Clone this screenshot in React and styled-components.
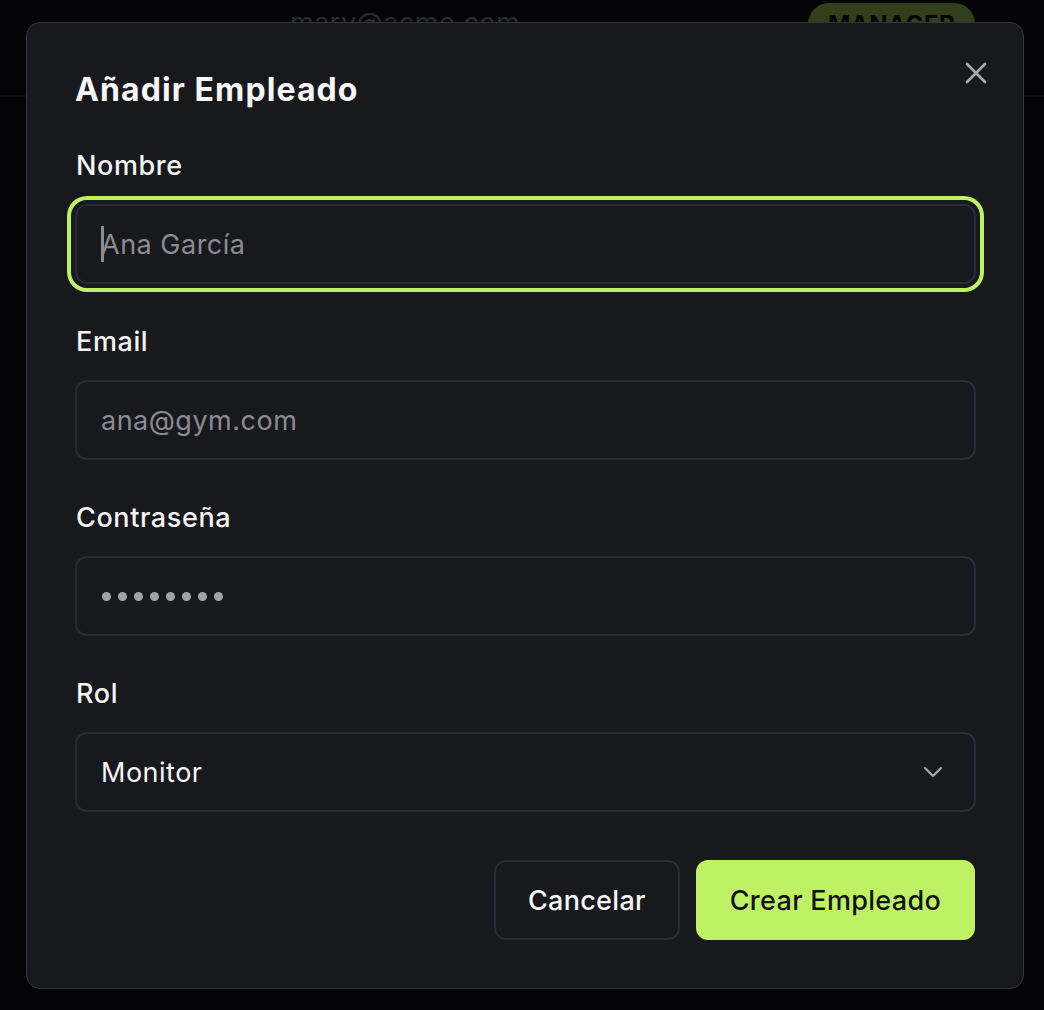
import React from 'react';
import styled, { createGlobalStyle } from 'styled-components';

const GlobalStyle = createGlobalStyle`
  html, body {
    margin: 0;
    padding: 0;
    background: #121317;
    font-family: Inter, "Noto Sans", sans-serif;
    overflow: hidden;
  }
  * { box-sizing: border-box; }
`;

const lime = '#bef264';

const Page = styled.div`
  width: 1044px;
  height: 1010px;
  background: #121317;
`;

const UserRow = styled.div`
  display: flex;
  align-items: flex-start;
  height: 97px;
  padding-top: 3px;
  border-bottom: 2px solid #2d2f37;
`;

const UserEmail = styled.span`
  margin-left: 290px;
  width: 518px;
  line-height: 40px;
  font-size: 27px;
  letter-spacing: 0.5px;
  color: #a6a7b0;
`;

const RoleBadge = styled.span`
  display: inline-flex;
  align-items: center;
  height: 42px;
  padding: 0 20px;
  border-radius: 21px;
  background: ${lime};
  color: #111;
  font-weight: 700;
  font-size: 24px;
  letter-spacing: 0.5px;
`;

const Overlay = styled.div`
  position: fixed;
  inset: 0;
  background: rgba(0, 0, 0, 0.74);
  display: flex;
  align-items: flex-start;
  padding: 22px 0 0 26px;
`;

const Dialog = styled.div`
  position: relative;
  width: 998px;
  background: #18191d;
  border: 1px solid #33343f;
  border-radius: 14px;
  padding: 48px;
`;

const Title = styled.h2`
  margin: 0 0 42px;
  font-size: 32px;
  line-height: 38px;
  font-weight: 700;
  color: #f7f7f8;
  letter-spacing: 1.1px;
`;

const CloseButton = styled.button`
  position: absolute;
  top: 30px;
  right: 27px;
  width: 40px;
  height: 40px;
  padding: 0;
  border: 0;
  background: none;
  color: #a9aab0;
  display: flex;
  align-items: center;
  justify-content: center;
`;

const Field = styled.div`
  display: flex;
  flex-direction: column;
  gap: 23px;
  margin-bottom: 43px;
`;

const Label = styled.label`
  padding-left: 1px;
  font-size: 27px;
  line-height: 30px;
  font-weight: 500;
  letter-spacing: 0.6px;
  color: #f4f4f5;
`;

const InputWrap = styled.div`
  position: relative;
  width: 901px;
`;

const Input = styled.input`
  width: 100%;
  height: 80px;
  padding: 0 24px;
  border: 2px solid #2a2b35;
  border-radius: 12px;
  background: #18191d;
  color: #f4f4f5;
  font-family: Inter, "Noto Sans", sans-serif;
  font-size: 27px;
  letter-spacing: 0.5px;
  outline: none;
  box-shadow: ${(p) => (p.$focused ? `0 0 0 4px #18191d, 0 0 0 8px ${lime}` : 'none')};

  &::placeholder {
    color: #8b8c93;
  }
`;

const Caret = styled.span`
  position: absolute;
  left: 26px;
  top: 22px;
  width: 3px;
  height: 36px;
  background: #8b8c93;
`;

const Dots = styled.div`
  display: flex;
  align-items: center;
  gap: 7px;
  height: 80px;
  padding: 0 25px;
  border: 2px solid #2a2b35;
  border-radius: 12px;
`;

const Dot = styled.span`
  width: 9px;
  height: 9px;
  border-radius: 50%;
  background: #a3a4aa;
`;

const Select = styled.div`
  display: flex;
  align-items: center;
  justify-content: space-between;
  height: 80px;
  padding: 0 30px 0 24px;
  border: 2px solid #2a2b35;
  border-radius: 12px;
  font-size: 27px;
  letter-spacing: 0.5px;
  color: #f4f4f5;
`;

const Actions = styled.div`
  display: flex;
  justify-content: flex-end;
  gap: 16px;
  margin-top: 48px;
`;

const Button = styled.button`
  height: 80px;
  padding: 0 32px;
  border-radius: 12px;
  border: 2px solid ${(p) => (p.$primary ? lime : '#2a2b35')};
  background: ${(p) => (p.$primary ? lime : '#18191d')};
  color: ${(p) => (p.$primary ? '#121212' : '#f7f7f8')};
  font-family: Inter, "Noto Sans", sans-serif;
  font-size: 27px;
  font-weight: 500;
  letter-spacing: 0.3px;
`;

function CloseIcon() {
  return (
    <svg width="22" height="22" viewBox="0 0 22 22" fill="none" stroke="currentColor" strokeWidth="2.6" strokeLinecap="round">
      <path d="M2 2l18 18M20 2L2 20" />
    </svg>
  );
}

function ChevronDown() {
  return (
    <svg width="22" height="14" viewBox="0 0 22 14" fill="none" stroke="#a3a4aa" strokeWidth="2.4" strokeLinecap="round" strokeLinejoin="round">
      <path d="M3 3l8 8 8-8" />
    </svg>
  );
}

export default function App() {
  return (
    <>
      <GlobalStyle />
      <Page>
        <UserRow>
          <UserEmail>mary@acme.com</UserEmail>
          <RoleBadge>MANAGER</RoleBadge>
        </UserRow>
      </Page>

      <Overlay>
        <Dialog>
          <Title>Añadir Empleado</Title>
          <CloseButton aria-label="Cerrar">
            <CloseIcon />
          </CloseButton>

          <Field>
            <Label>Nombre</Label>
            <InputWrap>
              <Input $focused placeholder="Ana García" />
              <Caret />
            </InputWrap>
          </Field>

          <Field>
            <Label>Email</Label>
            <InputWrap>
              <Input placeholder="ana@gym.com" />
            </InputWrap>
          </Field>

          <Field>
            <Label>Contraseña</Label>
            <InputWrap>
              <Dots>
                {Array.from({ length: 8 }).map((_, i) => (
                  <Dot key={i} />
                ))}
              </Dots>
            </InputWrap>
          </Field>

          <Field>
            <Label>Rol</Label>
            <InputWrap>
              <Select>
                Monitor
                <ChevronDown />
              </Select>
            </InputWrap>
          </Field>

          <Actions>
            <Button>Cancelar</Button>
            <Button $primary>Crear Empleado</Button>
          </Actions>
        </Dialog>
      </Overlay>
    </>
  );
}
